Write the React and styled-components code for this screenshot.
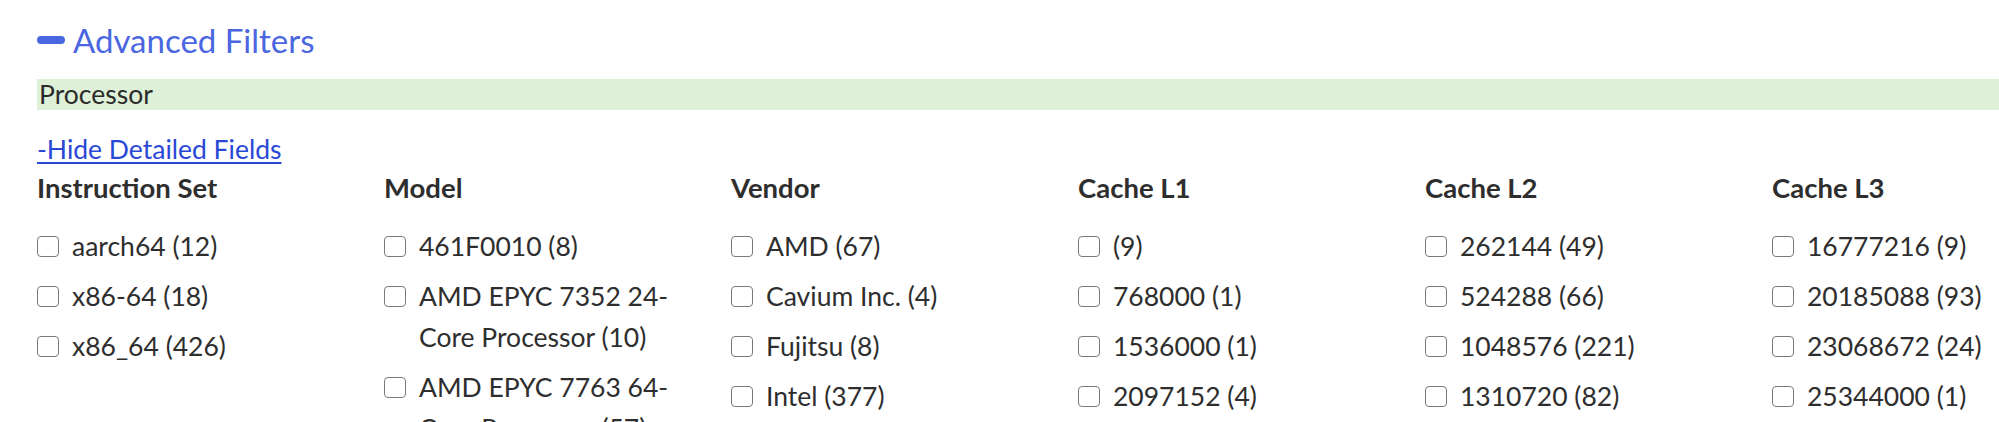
import React from "react"
import styled, { createGlobalStyle } from "styled-components"

const GlobalStyle = createGlobalStyle`
  body {
    margin: 0;
    background: #ffffff;
    font-family: "Lato", "Liberation Sans", sans-serif;
    color: #333333;
    overflow: hidden;
  }
`

const Page = styled.div`
  padding: 19px 0 0 37px;
  width: 1962px;
  height: 403px;
  overflow: hidden;
`

const Toggle = styled.div`
  align-items: center;
  color: #4a66e0;
  display: flex;
  font-size: 33px;
  gap: 8px;
  height: 42px;
`

const MinusBar = styled.span`
  background: #4a66e0;
  border-radius: 4px;
  display: inline-block;
  height: 8px;
  width: 28px;
`

const SectionBar = styled.div`
  background: #dff0d8;
  color: #2b2b2b;
  font-size: 26.5px;
  height: 31px;
  line-height: 31px;
  margin-top: 18px;
  padding-left: 2px;
`

const DetailLink = styled.a`
  color: #2a48d6;
  cursor: pointer;
  display: inline-block;
  font-size: 26.5px;
  line-height: 30px;
  margin-top: 24px;
  text-decoration: underline;
  text-underline-offset: 3px;
`

const Columns = styled.div`
  display: grid;
  grid-template-columns: repeat(6, 347px);
  margin-top: 6px;
`

const Column = styled.div`
  padding-right: 50px;
`

const ColumnTitle = styled.div`
  color: #2e2e2e;
  font-size: 27.5px;
  font-weight: 700;
  height: 36px;
  line-height: 36px;
  margin-bottom: 20px;
`

const Option = styled.label`
  align-items: flex-start;
  color: #2e2e2e;
  display: flex;
  font-size: 26.5px;
  gap: 13px;
  line-height: 41px;
  margin-bottom: 9px;
`

const Box = styled.input.attrs({ type: "checkbox" })`
  appearance: none;
  background: #ffffff;
  border: 1.5px solid #7a7a7a;
  border-radius: 4px;
  flex: none;
  height: 21px;
  margin: 10px 0 0;
  width: 22px;
`

const filters = [
  {
    title: "Instruction Set",
    options: ["aarch64 (12)", "x86-64 (18)", "x86_64 (426)"],
  },
  {
    title: "Model",
    options: [
      "461F0010 (8)",
      "AMD EPYC 7352 24-Core Processor (10)",
      "AMD EPYC 7763 64-Core Processor (57)",
    ],
  },
  {
    title: "Vendor",
    options: ["AMD (67)", "Cavium Inc. (4)", "Fujitsu (8)", "Intel (377)"],
  },
  {
    title: "Cache L1",
    options: ["(9)", "768000 (1)", "1536000 (1)", "2097152 (4)"],
  },
  {
    title: "Cache L2",
    options: ["262144 (49)", "524288 (66)", "1048576 (221)", "1310720 (82)"],
  },
  {
    title: "Cache L3",
    options: ["16777216 (9)", "20185088 (93)", "23068672 (24)", "25344000 (1)"],
  },
]

const App = () => (
  <>
    <GlobalStyle />
    <Page>
      <Toggle>
        <MinusBar />
        Advanced Filters
      </Toggle>
      <SectionBar>Processor</SectionBar>
      <DetailLink>-Hide Detailed Fields</DetailLink>
      <Columns>
        {filters.map(group => (
          <Column key={group.title}>
            <ColumnTitle>{group.title}</ColumnTitle>
            {group.options.map(option => (
              <Option key={option}>
                <Box />
                <span>{option}</span>
              </Option>
            ))}
          </Column>
        ))}
      </Columns>
    </Page>
  </>
)

export default App
